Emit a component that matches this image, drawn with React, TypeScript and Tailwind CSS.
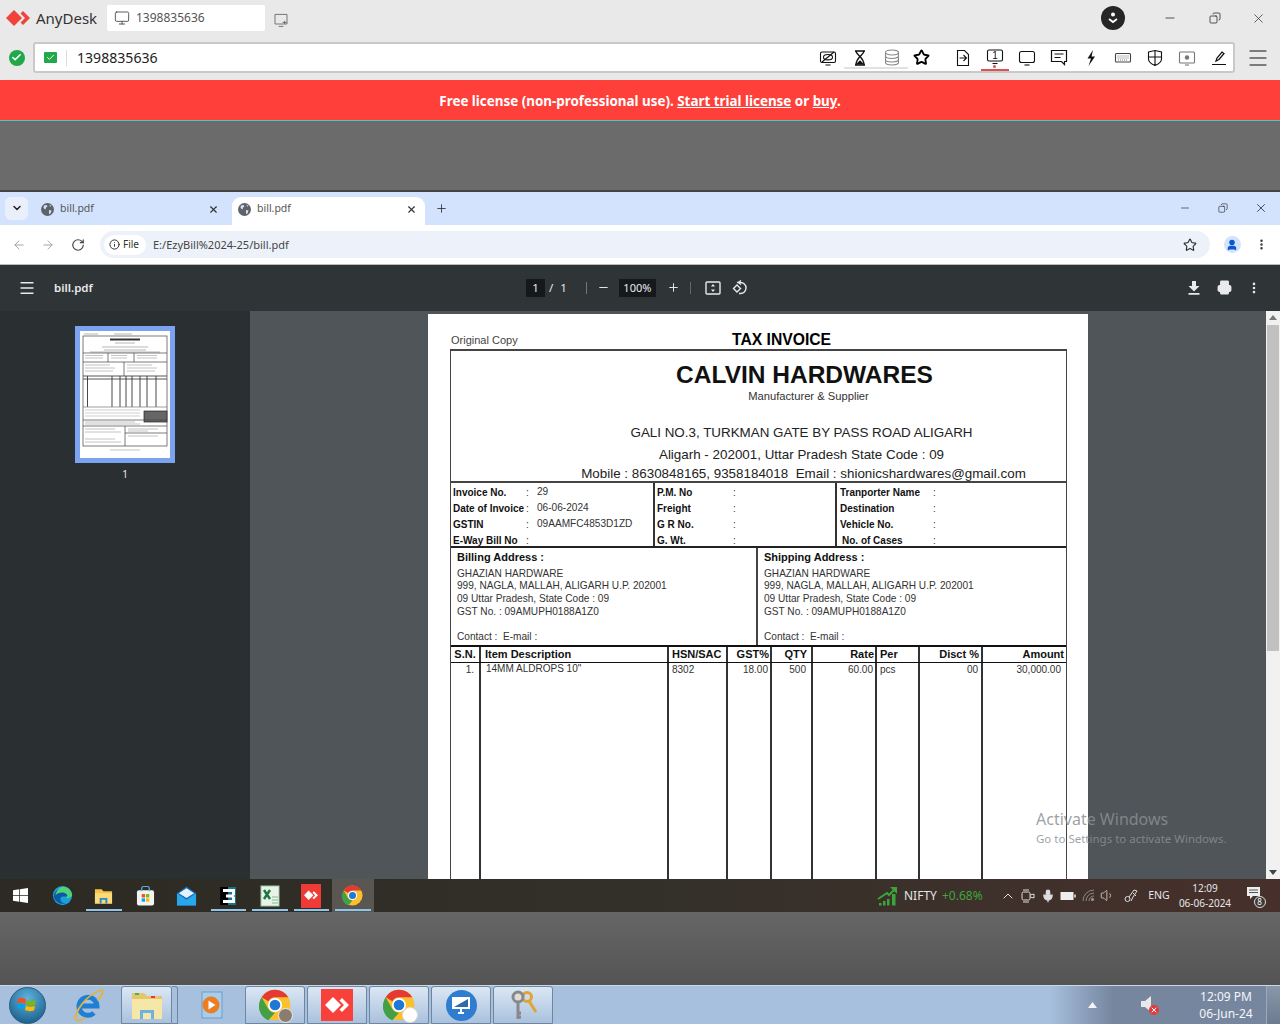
import React from "react";
import { Check, ChevronDown, X, Plus, Minus, ArrowLeft, ArrowRight, RotateCw, Info, Star, Menu, MoreVertical, Printer, Monitor, Copy, User, ChevronUp, Mic, Volume1 } from "lucide-react";

const seg = "font-['Noto_Sans',sans-serif]";

function AnyDeskLogo({ size = 22, color = "#ef443b" }: { size?: number; color?: string }) {
  return (
    <svg width={size} height={size * 0.75} viewBox="0 0 24 18">
      <path d="M7 1 L15 9 L7 17 L-1 9Z" fill={color} transform="translate(1 0)" />
      <path d="M15 2 L22 9 L15 16 L12.5 13.5 L17 9 L12.5 4.5Z" fill={color} transform="translate(2 0)" />
    </svg>
  );
}

function ChromeLogo({ size = 22 }: { size?: number }) {
  return (
    <svg width={size} height={size} viewBox="0 0 48 48">
      <circle cx="24" cy="24" r="23" fill="#fbc02d" />
      <path d="M24 1a23 23 0 0 1 20 11.5H24a11.5 11.5 0 0 0-10 5.8L4 12.5A23 23 0 0 1 24 1z" fill="#e53935" />
      <path d="M4 12.5l10 17.5a11.5 11.5 0 0 0 10 5.5L14 47A23 23 0 0 1 4 12.5z" fill="#43a047" />
      <circle cx="24" cy="24" r="10.5" fill="#fff" />
      <circle cx="24" cy="24" r="8" fill="#1e78d6" />
    </svg>
  );
}

function SolidGlobe() {
  return (
    <svg width="13" height="13" viewBox="0 0 13 13">
      <circle cx="6.500" cy="6.500" r="6.500" fill="#5f6368" />
      <path d="M3 2.500l2.500-.5 1 1.500-1.500 1-.5 2-2-1.500zM8 7l2.500.5-1 3-1.500.5zM8.500 1.500l2 1.500-1.500.5z" fill="#d3e3fd" />
    </svg>
  );
}

function Ico({ children, w = 20, h = 20 }: { children: React.ReactNode; w?: number; h?: number }) {
  return (
    <svg width={w} height={h} viewBox="0 0 20 20" fill="none" stroke="#111" strokeWidth="1.1">
      {children}
    </svg>
  );
}

function ToolSlot({ children, active, className = "" }: { children: React.ReactNode; active?: boolean; className?: string }) {
  return (
    <div className={`relative w-8 h-full flex items-center justify-center ${className}`}>
      {children}
      {active && <div className="absolute bottom-0 left-[2px] right-[2px] h-[2px] bg-[#d9534f]" />}
      {active && <div className="absolute bottom-[3px] left-[14px] w-[3px] h-[3px] rounded-full bg-[#d9534f]" />}
    </div>
  );
}

function AnyDeskTop() {
  return (
    <div className={`h-[80px] bg-[#e9e9e9] flex flex-col ${seg}`}>
      <div className="h-[42px] flex items-center pl-[6px] pb-[6px]">
        <AnyDeskLogo size={24} />
        <span className="ml-[6px] text-[15px] text-[#333] w-[71px]">AnyDesk</span>
        <div className="h-[26px] w-[158px] bg-white rounded-[2px] flex items-center pl-[7px] text-[12px] text-[#555]">
          <Monitor size={16} strokeWidth={1.2} color="#333" />
          <span className="ml-[6px]">1398835636</span>
        </div>
        <div className="ml-[8px] mt-[4px]">
          <Ico w={16} h={16}>
            <path d="M2.5 3h15v12h-15zM7 18h6" stroke="#666" />
            <path d="M12 13h5M14.5 11v4" stroke="#666" />
          </Ico>
        </div>
        <div className="ml-auto flex items-center">
          <div className="w-6 h-6 rounded-full bg-[#262626] flex items-center justify-center mr-[21px]">
            <svg width="12" height="14" viewBox="0 0 12 14"><circle cx="6" cy="3.5" r="2" fill="#fff" /><path d="M2 8l4 3 4-3" stroke="#fff" strokeWidth="1.8" fill="none" /></svg>
          </div>
          <div className="w-[48px] flex justify-center"><Minus size={14} strokeWidth={1.300} color="#222" /></div>
          <div className="w-[42px] flex justify-center"><Copy size={12} strokeWidth={1.500} color="#222" className="-scale-x-100" /></div>
          <div className="w-[44px] flex justify-center"><X size={15} strokeWidth={1.200} color="#333" /></div>
        </div>
      </div>
      <div className="flex-1 flex items-start">
        <div className="w-[33px] h-[31px] flex items-center justify-center">
          <div className="w-[16px] h-[16px] rounded-full bg-[#22a74a] flex items-center justify-center"><Check size={11} strokeWidth={3.5} color="#fff" /></div>
        </div>
        <div className="w-[1202px] h-[31px] bg-white rounded-[3px] border-2 border-[#c9c9c9] flex items-center">
          <div className="w-[31px] flex justify-center">
            <div className="w-[13px] h-[11px] bg-[#22a74a] rounded-[1px] flex items-center justify-center"><Check size={9} strokeWidth={2.5} color="#fff" /></div>
          </div>
          <div className="w-px h-[16px] bg-[#ddd]" />
          <span className="ml-[10px] text-[14.100px] mt-[1px] text-[#222]">1398835636</span>
          <div className="ml-auto flex items-center h-full -mr-[2px]">
            <ToolSlot><Ico>
              <rect x="2.5" y="4" width="15" height="10.5" rx="1.5" /><path d="M7.5 17h5M4 14L16 4" /><ellipse cx="10" cy="9.2" rx="4.5" ry="2.7" />
            </Ico></ToolSlot>
            <ToolSlot><Ico>
              <path d="M5 3h10M5 17h10M6 3c0 4 8 6 8 14M14 3c0 4-8 6-8 14" strokeWidth="1.4" /><path d="M7 16l3-3 3 3z" fill="#111" />
            </Ico><div className="absolute bottom-[2px] left-0 right-0 h-[2px] bg-[#e2e2e2]" /></ToolSlot>
            <ToolSlot><Ico>
              <ellipse cx="10" cy="4.5" rx="6.5" ry="2.5" stroke="#888" /><path d="M3.5 4.5v10c0 1.4 3 2.5 6.5 2.5s6.5-1.1 6.5-2.5v-10M3.5 8c0 1.4 3 2.5 6.5 2.5s6.5-1.1 6.5-2.5M3.5 11.5c0 1.4 3 2.5 6.5 2.5s6.500-1.100 6.500-2.500" stroke="#888" />
            </Ico><div className="absolute bottom-[2px] left-0 right-0 h-[2px] bg-[#e2e2e2]" /></ToolSlot>
            <div className="w-[30px] h-full flex items-center justify-center -ml-[2px]"><Star size={17} strokeWidth={2.6} color="#000" /></div>
            <div className="w-[11px]" />
            <ToolSlot><Ico>
              <path d="M4.5 2.5h7l4 4v11h-11zM6.5 10h7M10.5 7l3 3-3 3" />
            </Ico></ToolSlot>
            <ToolSlot active><div className="relative -mt-[2px]"><Ico>
              <rect x="2.5" y="3" width="15" height="11" rx="1.5" /><path d="M7.5 16.5h5" />
            </Ico><span className="absolute inset-0 flex items-center justify-center pb-[3px] text-[10px] font-['Liberation_Sans',sans-serif] text-[#111]">1</span></div></ToolSlot>
            <ToolSlot><Ico>
              <rect x="2.5" y="3.5" width="15" height="11" rx="2" /><path d="M7.5 17h5" />
            </Ico></ToolSlot>
            <ToolSlot><Ico>
              <path d="M2.500 2.500h15v11h-2v3l-3-3h-10zM5.500 6h9M5.500 9.500h6" strokeWidth="1.200" />
            </Ico></ToolSlot>
            <ToolSlot><svg width="12" height="18" viewBox="0 0 12 18"><path d="M8 1L2.500 9.500h3.500L3.500 17 10 7.500H6.500z" fill="#111" /></svg></ToolSlot>
            <ToolSlot><Ico>
              <rect x="2.5" y="5.5" width="15" height="8.5" rx="1" stroke="#444" /><path d="M4.5 8h11M4.5 10h11M5 12h10" stroke="#777" strokeDasharray="1 1" />
            </Ico></ToolSlot>
            <ToolSlot><Ico>
              <path d="M3.500 4l6.500-1.500L16.500 4v7c0 3-3 5-6.500 6.500C6.500 16 3.500 14 3.500 11zM10 2.500v15M3.500 9h13" />
            </Ico></ToolSlot>
            <ToolSlot><Ico>
              <rect x="2.500" y="4" width="15" height="11" rx="1" stroke="#777" /><circle cx="10" cy="9.500" r="2.200" fill="#777" stroke="none" /><path d="M8 17h4" stroke="#777" />
            </Ico></ToolSlot>
            <ToolSlot><Ico>
              <path d="M7 13l1-3 5-6 2 1.500-5 6zM3 16.500h14" strokeWidth="1.200" />
            </Ico></ToolSlot>
          </div>
        </div>
        <div className="flex-1 h-[31px] flex items-center justify-center"><Menu size={24} strokeWidth={1.100} color="#111" /></div>
      </div>
    </div>
  );
}

function Banner() {
  return (
    <div className={`h-[41px] bg-[#ff403a] border-b border-b-[#55c3bf] flex items-center justify-center pt-[3px] text-white text-[13.400px] font-bold ${seg}`}>
      <span>Free license (non-professional use). <u>Start trial license</u> or <u>buy</u>.</span>
    </div>
  );
}

function Tab({ active }: { active?: boolean }) {
  return (
    <div className={`h-[28px] self-end flex items-center pb-[3px] ${active ? "w-[193px] bg-white rounded-t-[9px] pl-[6px] pr-[8px]" : "w-[195px] pl-[4px] pr-[13px]"}`}>
      <SolidGlobe />
      <span className="ml-[6px] text-[10.500px] text-[#555]">bill.pdf</span>
      <X size={11} strokeWidth={2.5} color="#333" className="ml-auto" />
    </div>
  );
}

function ChromeBars() {
  return (
    <div className={seg}>
      <div className="h-[35px] bg-[#d3e3fd] border-t-2 border-t-[#444] flex items-end pl-[5px] pb-0">
        <div className="w-[23px] h-[23px] self-center bg-[#e9f0fb] rounded-[6px] flex items-center justify-center"><ChevronDown size={12} strokeWidth={3} color="#222" /></div>
        <div className="w-[9px]" />
        <Tab />
        <Tab active />
        <div className="self-center ml-[10px]"><Plus size={13} strokeWidth={1.6} color="#333" /></div>
        <div className="ml-auto self-center flex items-center">
          <div className="w-[38px] flex justify-center"><Minus size={12} strokeWidth={1.3} color="#222" /></div>
          <div className="w-[38px] flex justify-center"><Copy size={10} strokeWidth={1.5} color="#222" className="-scale-x-100" /></div>
          <div className="w-[38px] flex justify-center"><X size={14} strokeWidth={1.3} color="#222" /></div>
        </div>
      </div>
      <div className="h-[40px] bg-white border-b border-b-[#bbb] flex items-center pl-[10px] pt-px">
        <div className="w-[18px] flex justify-center"><ArrowLeft size={14} strokeWidth={1.5} color="#999" /></div>
        <div className="w-[11px]" />
        <div className="w-[18px] flex justify-center"><ArrowRight size={14} strokeWidth={1.5} color="#999" /></div>
        <div className="w-[12px]" />
        <div className="w-[18px] flex justify-center"><RotateCw size={14} strokeWidth={2} color="#444" /></div>
        <div className="w-[13px]" />
        <div className="w-[1110px] h-[27px] bg-[#edf2fa] rounded-full flex items-center pl-[4px] pr-[13px]">
          <div className="h-[20px] w-[42px] bg-white rounded-full flex items-center pl-[5px]">
            <Info size={11} strokeWidth={2} color="#222" />
            <span className="ml-[3px] text-[10px] text-[#333]">File</span>
          </div>
          <span className="ml-[7px] text-[11px] text-[#444]">E:/EzyBill%2024-25/bill.pdf</span>
          <Star size={14} strokeWidth={2} color="#333" className="ml-auto" />
        </div>
        <div className="w-[44px] flex justify-center">
          <div className="w-[17px] h-[17px] rounded-full bg-[#d3e3fd] flex items-center justify-center"><User size={12} strokeWidth={3} color="#0b57d0" fill="#0b57d0" /></div>
        </div>
        <MoreVertical size={13} strokeWidth={2.5} color="#333" className="ml-[1px]" />
      </div>
      <div className="h-[46px] bg-[#2f3437] flex items-center text-white relative">
        <div className="w-[54px] flex justify-center"><Menu size={18} strokeWidth={1.8} color="#e8eaed" /></div>
        <span className="text-[11.500px] font-semibold text-[#e8eaed]">bill.pdf</span>
        <div className="absolute left-[526px] top-0 h-full flex items-center text-[11.500px] text-[#e8eaed]">
          <div className="w-[19px] h-[18px] bg-[#16191b] flex items-center justify-center">1</div>
          <span className="ml-[4px]">/</span>
          <span className="ml-[7px]">1</span>
          <div className="ml-[19px] w-px h-[12px] bg-[#777]" />
          <Minus size={13} strokeWidth={1.8} className="ml-[10px]" />
          <div className="ml-[9px] w-[37px] h-[18px] bg-[#16191b] flex items-center justify-center text-[11px]">100%</div>
          <Plus size={13} strokeWidth={1.8} className="ml-[11px]" />
          <div className="ml-[10px] w-px h-[12px] bg-[#666]" />
          <div className="ml-[14px]"><svg width="16" height="14" viewBox="0 0 16 14" fill="none" stroke="#e8eaed" strokeWidth="1.4"><rect x="1" y="1" width="14" height="12" rx="1" /><path d="M8 3L6 5.500h4zM8 11L6 8.500h4z" fill="#e8eaed" stroke="none" /></svg></div>
          <div className="ml-[11px]"><svg width="16" height="16" viewBox="0 0 16 16" fill="none" stroke="#e8eaed" strokeWidth="1.4"><path d="M1.500 8.500L5 5l3.500 3.500L5 12z" /><path d="M5 2.500h3.500a5.500 5.500 0 1 1 0 11H7" /><path d="M9 .5L6.500 2.500 9 4.500" /></svg></div>
        </div>
        <div className="ml-auto flex items-center">
          <div className="w-[30px] flex justify-center"><svg width="12" height="14" viewBox="0 0 12 14"><path d="M4 0h4v5h3.500L6 10.500.5 5H4zM.5 12h11v1.800H.5z" fill="#e8eaed" /></svg></div>
          <div className="w-[30px] flex justify-center"><Printer size={15} strokeWidth={2.2} color="#e8eaed" fill="#e8eaed" /></div>
          <div className="w-[30px] flex justify-center mr-[11px]"><MoreVertical size={14} strokeWidth={2.5} color="#e8eaed" /></div>
        </div>
      </div>
    </div>
  );
}

function Thumb() {
  const xs = [7.500, 32, 40, 46, 52, 60, 67, 76];
  return (
    <div className="flex flex-col items-center">
      <div className="w-[100px] h-[137px] bg-white border-[5px] border-[#7ba3f0] flex">
        <svg width="90" height="127" viewBox="0 0 90 127" fill="none" stroke="#444" strokeWidth="0.7">
          <rect x="3" y="5" width="84" height="110" />
          <path d="M4 3h14M34 3h18" stroke="#999" />
          <path d="M30 8.500h30" stroke="#333" strokeWidth="2" />
          <path d="M35 12h20M22 16h46M24 19h42M10 21h70" stroke="#999" />
          <path d="M3 22h84M3 31h84M28 22v9M54 22v9" />
          <path d="M5 24.500h18M5 27h18M31 24.500h16M31 27h16M57 24.500h20M57 27h20M5 34h25M5 37h30M47 34h25M47 37h30M5 40h28M47 40h28" stroke="#aaa" />
          <path d="M44 31v14" />
          <path d="M3 45h84M3 48h84" strokeWidth="0.9" />
          {xs.map((x) => <path key={x} d={`M${x} 45V76`} strokeWidth="0.9" stroke="#333" />)}
          <path d="M3 76h84" stroke="#777" />
          <path d="M5 79h55M5 82h55M5 85h55" stroke="#bbb" />
          <rect x="64" y="80" width="23" height="11" fill="#666" stroke="#222" />
          <path d="M3 89h84M3 95h84M45 95v20M45 102h42" />
          <path d="M5 91h50M5 93h55M5 98h30M5 101h36M5 108h30M5 111h36M48 98h30M48 100h20M48 105h30" stroke="#aaa" />
          <path d="M30 119h30" stroke="#aaa" />
        </svg>
      </div>
      <span className="mt-[4px] text-[10px] text-[#e8eaed]">1</span>
    </div>
  );
}

function InfoRow({ label, value, colon, cls = "" }: { label: string; value?: string; colon: number; cls?: string }) {
  return (
    <div className={`flex h-[16px] items-center relative ${cls}`}>
      <span className="font-bold text-[10px] text-[#111] whitespace-nowrap">{label}</span>
      <span className="absolute text-[10px] text-[#333]" style={{ left: colon }}>:</span>
      {value && <span className="absolute left-[84px] -top-[1px] text-[10.100px] text-[#333]">{value}</span>}
    </div>
  );
}

function AddressCol({ title, cls }: { title: string; cls: string }) {
  return (
    <div className={`${cls} pt-[2px]`}>
      <div className="pl-[6px] font-bold text-[11px] h-[15px] leading-[15px] text-[#111]">{title}</div>
      <div className="pl-[6px] mt-[3px] text-[10.100px] leading-[12.700px] text-[#333]">
        <div>GHAZIAN HARDWARE</div>
        <div>999, NAGLA, MALLAH, ALIGARH U.P. 202001</div>
        <div>09 Uttar Pradesh, State Code : 09</div>
        <div>GST No. : 09AMUPH0188A1Z0</div>
        <div className="mt-[12px]">Contact :&nbsp; E-mail :</div>
      </div>
    </div>
  );
}

const cols = "grid grid-cols-[30px_188px_59px_44px_41px_64px_43px_63px_83px]";

function Invoice() {
  const heads: [string, string][] = [
    ["S.N.", "text-center"], ["Item Description", "pl-[4px]"], ["HSN/SAC", "pl-[3px]"], ["GST%", "text-right pr-[1px]"], ["QTY", "text-right pr-[4px]"],
    ["Rate", "text-right pr-[1px]"], ["Per", "pl-[3px]"], ["Disct %", "text-right pr-[2px]"], ["Amount", "text-right pr-[2px]"],
  ];
  const vals: [string, string][] = [
    ["1.", "text-right pr-[5px]"], ["14MM ALDROPS 10\"", "pl-[5px] -mt-[1px]"], ["8302", "pl-[3px]"], ["18.00", "text-right pr-[2px]"], ["500", "text-right pr-[5px]"],
    ["60.00", "text-right pr-[2px]"], ["pcs", "pl-[3px]"], ["00", "text-right pr-[3px]"], ["30,000.00", "text-right pr-[5px]"],
  ];
  return (
    <div className="w-[660px] h-[566px] bg-white overflow-hidden pt-[16px] px-[22px] font-['Liberation_Sans',sans-serif] text-black shrink-0">
      <div className="flex items-end h-[19px] relative">
        <span className="text-[11px] text-[#444] pl-px">Original Copy</span>
        <span className="absolute left-[282px] -top-[2px] text-[15.700px] font-bold">TAX INVOICE</span>
      </div>
      <div className="w-[617px] border border-[#444] border-t-2 border-b-0 h-[600px]">
        <div className="h-[130px] pl-[92px] flex flex-col items-center text-[#222]">
          <div className="text-[24.500px] leading-[28px] font-bold mt-[10px] text-[#111]">CALVIN HARDWARES</div>
          <div className="text-[11.200px] leading-[14px] pl-[8px] text-[#333]">Manufacturer &amp; Supplier</div>
          <div className="text-[13.400px] leading-[16px] mt-[22px] pr-[6px]">GALI NO.3, TURKMAN GATE BY PASS ROAD ALIGARH</div>
          <div className="text-[13.400px] leading-[16px] mt-[6px] pr-[6px]">Aligarh - 202001, Uttar Pradesh State Code : 09</div>
          <div className="text-[13.400px] leading-[16px] mt-[3px] pr-[2px] whitespace-pre">Mobile : 8630848165, 9358184018  Email : shionicshardwares@gmail.com</div>
        </div>
        <div className="flex h-[65px] border-t-2 border-[#444]">
          <div className="w-[204px] pl-[2px] pt-[2px] border-r-2 border-[#333]">
            <InfoRow label="Invoice No." value="29" colon={73} />
            <InfoRow label="Date of Invoice" value="06-06-2024" colon={73} />
            <InfoRow label="GSTIN" value="09AAMFC4853D1ZD" colon={73} />
            <InfoRow label="E-Way Bill No" colon={73} />
          </div>
          <div className="w-[182px] pl-[2px] pt-[2px] border-r-2 border-[#333]">
            <InfoRow label="P.M. No" colon={76} />
            <InfoRow label="Freight" colon={76} />
            <InfoRow label="G R No." colon={76} />
            <InfoRow label="G. Wt." colon={76} />
          </div>
          <div className="flex-1 pl-[3px] pt-[2px] text-[10px]">
            <InfoRow label="Tranporter Name" colon={93} />
            <InfoRow label="Destination" colon={93} />
            <InfoRow label="Vehicle No." colon={93} />
            <InfoRow label="No. of Cases" colon={93} cls="pl-[2px]" />
          </div>
        </div>
        <div className="flex h-[99px] border-t-2 border-[#222]">
          <AddressCol title="Billing Address :" cls="w-[307px] border-r-2 border-[#444]" />
          <AddressCol title="Shipping Address :" cls="flex-1" />
        </div>
        <div className={`${cols} h-[18px] border-t-2 border-b border-[#111] text-[11px] font-bold leading-[15px] text-[#111]`}>
          {heads.map(([t, c], i) => (
            <div key={t} className={`${c} ${i < 8 ? "border-r-2 border-[#333]" : ""}`}>{t}</div>
          ))}
        </div>
        <div className={`${cols} h-[300px] text-[10px] text-[#333] leading-[14px]`}>
          {vals.map(([t, c], i) => (
            <div key={i} className={`${i < 8 ? "border-r-2 border-[#333]" : ""}`}>
              <div className={c}>{t}</div>
            </div>
          ))}
        </div>
      </div>
    </div>
  );
}

function PdfBody() {
  return (
    <div className="h-[569px] flex overflow-hidden relative">
      <div className="w-[250px] bg-[#2a2f32] flex justify-center pt-[15px] shrink-0"><Thumb /></div>
      <div className="flex-1 bg-[#4f5558] flex justify-center pt-[3px]"><Invoice /></div>
      <div className="w-[14px] bg-[#f1f1f1] flex flex-col items-center shrink-0">
        <div className="h-[14px] flex items-center"><svg width="8" height="5" viewBox="0 0 8 5"><path d="M4 0l4 5H0z" fill="#777" /></svg></div>
        <div className="w-[12px] h-[326px] bg-[#c1c1c1]" />
        <div className="mt-auto h-[14px] flex items-center"><svg width="8" height="5" viewBox="0 0 8 5"><path d="M4 5l4-5H0z" fill="#444" /></svg></div>
      </div>
      <div className={`absolute left-[1036px] top-[496px] pointer-events-none ${seg} text-[#8b9093]/85`}>
        <div className="text-[16px] leading-[24px]">Activate Windows</div>
        <div className="text-[11.500px] leading-[16px]">Go to Settings to activate Windows.</div>
      </div>
    </div>
  );
}

function WinLogo({ size = 14, color = "#fff" }: { size?: number; color?: string }) {
  return (
    <svg width={size} height={size} viewBox="0 0 16 16" fill={color}>
      <path d="M0 2.300l6.500-.9v6.200H0zM7.300 1.300L16 0v7.600H7.300zM0 8.400h6.500v6.200L0 13.700zM7.300 8.400H16V16l-8.700-1.300z" />
    </svg>
  );
}

function TbItem({ children, on, hi }: { children: React.ReactNode; on?: boolean; hi?: boolean }) {
  return (
    <div className={`relative w-[41.500px] h-full flex items-center justify-center ${hi ? "bg-[#5a5651]" : ""}`}>
      {children}
      {on && <div className="absolute bottom-[1px] left-[3px] right-[3px] h-[2px] bg-[#8cc6ef]" />}
    </div>
  );
}

function TraySlot({ w = "w-[20px]", children }: { w?: string; children: React.ReactNode }) {
  return <div className={`${w} h-full flex items-center justify-center`}>{children}</div>;
}

function Win10Bar() {
  return (
    <div className={`h-[33px] bg-gradient-to-r from-[#2d2a24] via-[#33302a] to-[#47302b] flex items-center ${seg}`}>
      <TbItem><WinLogo size={15} /></TbItem>
      <TbItem>
        <svg width="21" height="21" viewBox="0 0 24 24"><circle cx="12" cy="12" r="11" fill="#1aa0d8" /><path d="M2 13C3 6 9 3 14 4c5 1 8 5 8 9h-9c-3 0-4 2-3 5 1 2 3 3 6 3-6 2-13-2-14-8z" fill="#0c59a4" /><path d="M14 2c5 1 9 5 9 10-1 2-4 3-7 3 2-2 2-4 0-5-3-2-9-2-12 2C5 6 9 1 14 2z" fill="#52d17a" /></svg>
      </TbItem>
      <TbItem on>
        <svg width="19" height="18" viewBox="0 0 20 18"><path d="M1 2h7l2 2h9v13H1z" fill="#f6c344" /><rect x="1" y="6" width="18" height="11" fill="#fadb7a" /><path d="M6 17v-6h8v6h-2v-4H8v4z" fill="#2f86c7" /></svg>
      </TbItem>
      <TbItem>
        <svg width="19" height="22" viewBox="0 0 20 22"><rect x="1" y="5" width="18" height="16" rx="2" fill="#f3f3f3" /><path d="M6 6V3a2 2 0 0 1 2-2h4a2 2 0 0 1 2 2v3" stroke="#4fb6d8" strokeWidth="1.300" fill="none" /><rect x="6" y="9" width="3.500" height="3.500" fill="#f25022" /><rect x="10.500" y="9" width="3.500" height="3.500" fill="#7fba00" /><rect x="6" y="13.500" width="3.500" height="3.500" fill="#00a4ef" /><rect x="10.500" y="13.500" width="3.500" height="3.500" fill="#ffb900" /></svg>
      </TbItem>
      <TbItem>
        <svg width="21" height="22" viewBox="0 0 22 22"><path d="M1 8L11 1l10 7v13H1z" fill="#0f6cbd" /><path d="M1 8l10 7 10-7v13H1z" fill="#28a8ea" /><path d="M3 8l8-5 8 5-8 5z" fill="#e5f1fb" /></svg>
      </TbItem>
      <TbItem on>
        <svg width="18" height="20" viewBox="0 0 18 20"><rect x="1" y="1" width="8" height="18" fill="#000" /><rect x="9" y="1" width="8" height="18" fill="#17728c" /><path d="M4 3h12v6l-1.500 1L16 11v6H4v-3h9v-2.500H7v-3h6V6H4z" fill="#fff" /></svg>
      </TbItem>
      <TbItem on>
        <svg width="20" height="22" viewBox="0 0 20 22"><rect x="1" y="1" width="18" height="20" fill="#e9f3e8" stroke="#9cc8a4" /><path d="M4 5l6 9M10 5l-6 9" stroke="#1d7a42" strokeWidth="2.500" /><path d="M12 12h6M12 15h6M12 18h6" stroke="#84b792" /></svg>
      </TbItem>
      <TbItem on>
        <div className="w-[20px] h-[24px] bg-[#ef3b36] flex items-center justify-center"><AnyDeskLogo size={14} color="#fff" /></div>
      </TbItem>
      <TbItem on hi><ChromeLogo size={21} /></TbItem>
      <div className="ml-auto flex items-center h-full text-[#e6e6e6] pr-[9px]">
        <svg width="20" height="20" viewBox="0 0 20 20"><path d="M1 13L10 7l2 2 6-6" stroke="#3aa63a" strokeWidth="2" fill="none" /><path d="M13 1h7v7z" fill="#3aa63a" /><rect x="2" y="17" width="2.500" height="2.500" fill="#3aa63a" /><rect x="6" y="15" width="2.500" height="4.500" fill="#3aa63a" /><rect x="10" y="13" width="2.500" height="6.500" fill="#3aa63a" /><rect x="15" y="8" width="3.500" height="11.500" fill="#3aa63a" /></svg>
        <span className="ml-[7px] text-[12px] w-[38px]">NIFTY</span>
        <span className="text-[12px] text-[#3fa53c] w-[56px]">+0.68%</span>
        <TraySlot><ChevronUp size={16} strokeWidth={1.500} /></TraySlot>
        <TraySlot><svg width="14" height="16" viewBox="0 0 14 16" fill="none" stroke="#ddd"><rect x="1" y="4" width="8" height="8" rx="1.500" /><path d="M9 7l4-1v4l-4-1M2 2h6M2 14h6" /></svg></TraySlot>
        <TraySlot><Mic size={14} strokeWidth={2} fill="#ddd" color="#ddd" /></TraySlot>
        <TraySlot><svg width="16" height="10" viewBox="0 0 16 10"><rect x="0.500" y="1" width="13" height="8" fill="#eee" /><rect x="14" y="3.500" width="2" height="3" fill="#bbb" /></svg></TraySlot>
        <TraySlot><svg width="13" height="13" viewBox="0 0 13 13" fill="none" stroke="#888"><path d="M1 12A11 11 0 0 1 12 1M4 12a8 8 0 0 1 8-8M7 12a5 5 0 0 1 5-5" /><circle cx="10.500" cy="10.500" r="1.200" fill="#aaa" /></svg></TraySlot>
        <TraySlot w="w-[19px]"><Volume1 size={15} strokeWidth={1.200} /></TraySlot>
        <TraySlot w="w-[28px]"><svg width="15" height="15" viewBox="0 0 15 15" fill="none" stroke="#ddd"><circle cx="3.500" cy="11" r="2.500" /><path d="M5 9l5-7 3 1-4 6-2 4M9 5l3 3" /></svg></TraySlot>
        <TraySlot w="w-[28px]"><span className="text-[10.500px]">ENG</span></TraySlot>
        <div className="w-[64px] text-center text-[10px] leading-[15px] whitespace-nowrap"><div>12:09</div><div>06-06-2024</div></div>
        <TraySlot w="w-[34px]">
          <div className="relative w-[17px] h-[20px]">
            <svg width="16" height="14" viewBox="0 0 16 14"><path d="M1 1h13v9H7l-3 3v-3H1z" fill="#eee" /><path d="M3 4h9M3 6.500h9" stroke="#555" /></svg>
            <span className="absolute -right-[3px] bottom-[-2px] w-[12px] h-[12px] rounded-full bg-[#3b3a37] border border-[#ddd] text-[8px] leading-[10px] text-center text-white">8</span>
          </div>
        </TraySlot>
      </div>
    </div>
  );
}

function Win7Btn({ children }: { children: React.ReactNode }) {
  return (
    <div className="w-[60px] h-full rounded-t-[3px] border border-[#6f86a1] bg-gradient-to-b from-[#dbe7f4] to-[#a9c1dd] flex items-center justify-center mr-[2px] shrink-0">
      {children}
    </div>
  );
}

function Win7Bar() {
  return (
    <div className={`h-[39px] border-t border-t-[#c9d8e8] bg-gradient-to-r from-[#a7c0de] from-[82%] to-[#76869f] to-[87%] flex items-stretch ${seg}`}>
      <div className="w-[54px] flex items-center justify-center shrink-0">
        <div className="w-[37px] h-[37px] rounded-full bg-[radial-gradient(circle_at_50%_30%,#5fb3dc,#10507f)] border border-[#2d5a7c] flex items-center justify-center">
          <svg width="20" height="20" viewBox="0 0 20 20"><path d="M1 4c3-1.500 5-1 8 .5L8 9C5 7.500 3 7.500 0 8.500z" fill="#f25022" /><path d="M10 5c3 1.500 5 1.500 9 .5L18 10c-3 1-5 1-9-.5z" fill="#7fba00" /><path d="M0 9.500c3-1 5-1 8 .5l-1 4.500c-3-1.500-5-1.500-8-.5z" fill="#00a4ef" /><path d="M9 10.500c3 1.500 5 1.500 9 .5l-1 4.500c-4 1-6 1-9-.5z" fill="#ffb900" /></svg>
        </div>
      </div>
      <div className="w-[67px] flex items-center justify-center shrink-0">
        <svg width="32" height="34" viewBox="0 0 32 34" fill="none"><path d="M8 18h17a9 9 0 1 0-3 7" stroke="#1f7fd4" strokeWidth="5" /><path d="M4 32C1 26 14 6 30 2c2 2-1 8-5 10M4 32c2 1 6 0 9-2" stroke="#e3b33a" strokeWidth="1.800" /></svg>
      </div>
      <div className="w-[51px] h-full rounded-t-[3px] border border-[#6f86a1] bg-gradient-to-b from-[#dbe7f4] to-[#a9c1dd] flex items-center justify-center shrink-0">
        <svg width="32" height="30" viewBox="0 0 32 30"><path d="M1 3h12l3 3h15v23H1z" fill="#e5c66f" /><rect x="1" y="9" width="30" height="20" fill="#f5e7a8" /><path d="M9 29v-9h14v9h-3v-6h-8v6z" fill="#6fb2de" /><rect x="4" y="3" width="4" height="2" fill="#4caf50" /><rect x="20" y="6" width="4" height="2" fill="#e53935" /></svg>
      </div>
      <div className="w-[6px] h-full border-r border-y border-[#6f86a1] rounded-tr-[3px] shrink-0" />
      <div className="w-[67px] flex items-center justify-center shrink-0">
        <svg width="26" height="30" viewBox="0 0 26 30"><rect x="3" y="2" width="20" height="26" fill="#a8cdea" stroke="#6e9ec7" /><circle cx="12" cy="15" r="8.500" fill="#ed7d22" /><path d="M9.500 10.500l7 4.500-7 4.500z" fill="#fff" /></svg>
      </div>
      <Win7Btn>
        <div className="relative"><ChromeLogo size={32} /><div className="absolute -right-[2px] -bottom-[2px] w-[15px] h-[15px] rounded-full bg-[#8a7d6d] border border-[#eee]" /></div>
      </Win7Btn>
      <Win7Btn>
        <div className="w-[32px] h-[32px] bg-[#f8413a] flex items-center justify-center"><AnyDeskLogo size={24} color="#fff" /></div>
      </Win7Btn>
      <Win7Btn>
        <div className="relative"><ChromeLogo size={32} /><div className="absolute -right-[3px] -bottom-[2px] w-[16px] h-[16px] rounded-full bg-white border border-[#ddd]" /></div>
      </Win7Btn>
      <Win7Btn>
        <div className="w-[31px] h-[31px] rounded-full bg-[#2e7dd0] flex items-center justify-center">
          <svg width="20" height="18" viewBox="0 0 20 18"><rect x="1" y="1" width="18" height="12" fill="#fff" /><path d="M3 11L17 3v8z" fill="#2e6aa8" /><path d="M7 17h6M10 13v4" stroke="#fff" strokeWidth="2" /></svg>
        </div>
      </Win7Btn>
      <Win7Btn>
        <svg width="30" height="34" viewBox="0 0 30 34" fill="none"><circle cx="19" cy="9" r="4.500" stroke="#e0a432" strokeWidth="3" /><path d="M21 13l7 11" stroke="#e0a432" strokeWidth="3" /><circle cx="10" cy="9" r="5" stroke="#888" strokeWidth="3" fill="#ddd" /><path d="M10 14v17M10 25h3M10 29h3" stroke="#888" strokeWidth="3" /></svg>
      </Win7Btn>
      <div className="ml-auto flex items-center h-full text-white">
        <svg width="9" height="6" viewBox="0 0 9 6"><path d="M4.500 0L9 6H0z" fill="#f5f5f5" /></svg>
        <div className="w-[44px]" />
        <div className="relative w-[16px] h-[18px]">
          <svg width="12" height="16" viewBox="0 0 12 16"><path d="M0 5h4l6-5v16l-6-5H0z" fill="#e8e8e8" /></svg>
          <div className="absolute -right-[2px] bottom-[-1px] w-[10px] h-[10px] rounded-full bg-[#e23b3b] flex items-center justify-center"><X size={8} strokeWidth={3} color="#fff" /></div>
        </div>
        <div className="w-[41px]" />
        <div className="text-[12px] leading-[17px] text-center text-[#f4f6f9] w-[56px]"><div>12:09 PM</div><div>06-Jun-24</div></div>
        <div className="w-[12px]" />
        <div className="w-[14px] h-full border-l border-[#9aa9bd] bg-gradient-to-b from-[#8a97a9] to-[#6d7b90]" />
      </div>
    </div>
  );
}

export default function App() {
  return (
    <div className="w-[1280px] h-[1024px] overflow-hidden flex flex-col bg-[#666]">
      <AnyDeskTop />
      <Banner />
      <div className="h-[69px] bg-[#6b6b6b]" />
      <ChromeBars />
      <PdfBody />
      <Win10Bar />
      <div className="h-[73px] bg-gradient-to-b from-[#666666] to-[#545454]" />
      <Win7Bar />
    </div>
  );
}
